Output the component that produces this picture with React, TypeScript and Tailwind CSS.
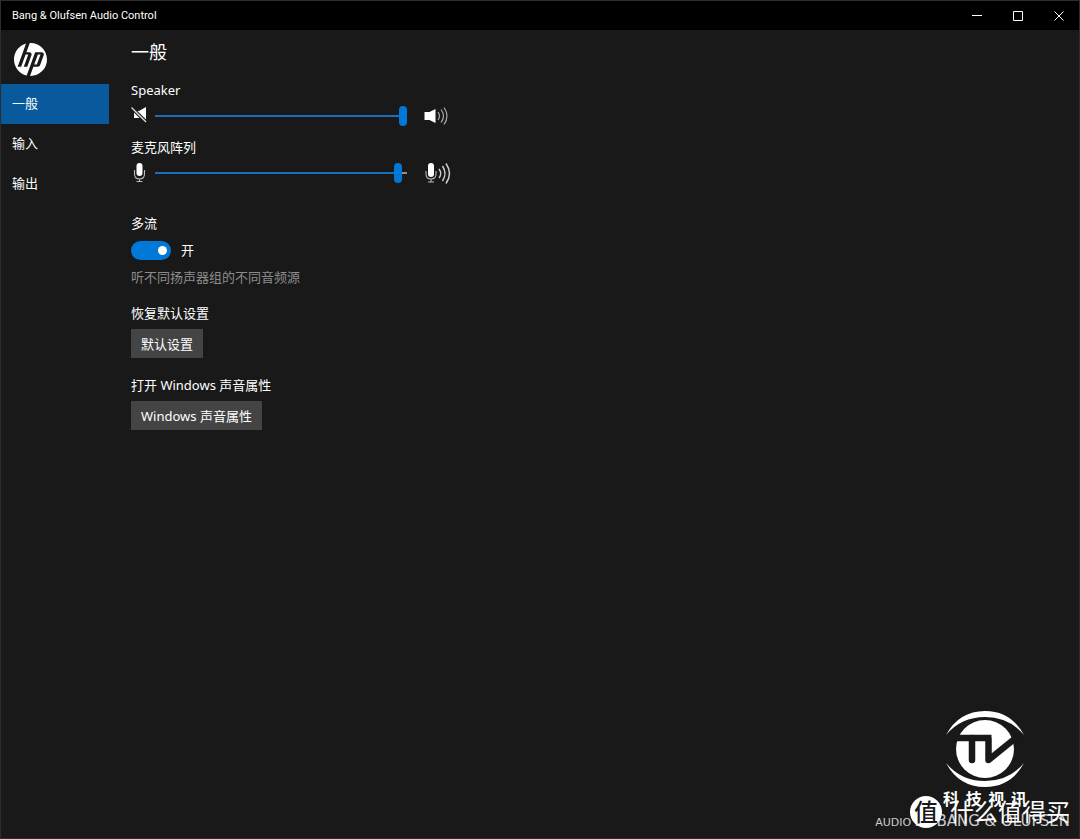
import React, { useState } from 'react'
import { SiHp } from 'react-icons/si'

const tabs = ['一般', '输入', '输出']

function SpeakerMuted() {
  return (
    <svg className="h-5 w-5" viewBox="0 0 20 20" fill="none">
      <path d="M3 5h5l7-4v15l-6-4H3z" fill="#fff" />
      <path d="M0 2.500l15 15" stroke="#191919" strokeWidth="1.500" />
      <path d="M1.500 1l14 14" stroke="#191919" strokeWidth="1.500" />
      <path d="M0.500 1.500l14.500 14.500" stroke="#ddd" strokeWidth="1.300" />
    </svg>
  )
}

function SpeakerLoud() {
  return (
    <svg className="h-6 w-7" viewBox="0 0 28 24" fill="none">
      <path d="M1.500 8h5l6-3v14l-6-3h-5z" fill="#fff" />
      <g stroke="#aaa" strokeWidth="1.2">
        <path d="M15 8q3 4 0 8" />
        <path d="M18 5.500q5 6.500 0 13" />
        <path d="M21 3.500q6 8.500 0 17" />
      </g>
    </svg>
  )
}

function Mic() {
  return (
    <svg className="h-5 w-5" viewBox="0 0 20 20" fill="none">
      <rect x="5.500" y="0" width="6" height="13" rx="3" fill="#fff" />
      <path d="M3.500 7v4q0 5 5 5t5-5V7M8.500 16v2.500M5.500 18.500h6" stroke="#bbb" strokeWidth="1.100" />
    </svg>
  )
}

function MicLoud() {
  return (
    <svg className="h-6 w-7" viewBox="0 0 28 24" fill="none">
      <rect x="5" y="2" width="6" height="14" rx="3" fill="#fff" />
      <path d="M3 10v3q0 5 5 5t5-5v-3M8 18v3M5 21h6" stroke="#bbb" strokeWidth="1.100" />
      <g stroke="#ccc" strokeWidth="1.500">
        <path d="M16 8q3.500 4.500 0 9" />
        <path d="M19.500 5q5 7.500 0 15" />
        <path d="M23 2.500q7 10 0 20" />
      </g>
    </svg>
  )
}

type VolumeProps = {
  id: string
  label: string
  start: number
  low: React.ReactNode
  high: React.ReactNode
}

function Volume({ id, label, start, low, high }: VolumeProps) {
  const [value, setValue] = useState(start)
  return (
    <div>
      <label htmlFor={id} className="block leading-5">{label}</label>
      <div className="mt-1 flex h-6 items-center">
        <div className="w-6 shrink-0">{low}</div>
        <input
          id={id}
          type="range"
          min="0"
          max="100"
          value={value}
          onChange={(e) => setValue(Number(e.target.value))}
          style={{ backgroundImage: `linear-gradient(to right, #1b6fb8 ${value}%, #a08c7c ${value}%)` }}
          className="h-5 w-full max-w-[252px] cursor-pointer appearance-none bg-[length:100%_2px] bg-center bg-no-repeat outline-none [&::-webkit-slider-thumb]:h-5 [&::-webkit-slider-thumb]:w-2 [&::-webkit-slider-thumb]:appearance-none [&::-webkit-slider-thumb]:rounded-full [&::-webkit-slider-thumb]:bg-[#0078d7]"
        />
        <div className="ml-4 shrink-0">{high}</div>
      </div>
    </div>
  )
}

function Watermark() {
  return (
    <div className="pointer-events-none absolute right-[9px] bottom-[10px] w-40">
      <div className="ml-[27px] flex w-24 flex-col items-center">
        <svg className="h-20 w-20" viewBox="0 0 80 80">
          <path d="M1 26Q14 2 40 2t39 24Q64 8 40 8T1 26z" fill="#fff" />
          <path d="M1 54q13 24 39 24t39-24Q64 72 40 72T1 54z" fill="#fff" />
          <circle cx="40" cy="40" r="29" fill="#fff" />
          <g fill="none" stroke="#191919" strokeWidth="6.500">
            <path d="M10 29h36.500M43.500 29v22L72 28" strokeLinejoin="round" />
            <path d="M27 29v22" strokeLinecap="round" />
          </g>
        </svg>
        <div className="flex w-[84px] justify-between text-base leading-5 font-bold">
          <span>科</span><span>技</span><span>视</span><span>讯</span>
        </div>
      </div>
      <div className="-mt-[13px] flex items-center gap-2">
        <span className="flex size-8 shrink-0 items-center justify-center rounded-full bg-white text-2xl leading-8 font-medium text-[#191919]">值</span>
        <span className="text-2xl leading-8 whitespace-nowrap">什么值得买</span>
      </div>
    </div>
  )
}

function App() {
  const [tab, setTab] = useState(0)
  const [multi, setMulti] = useState(true)

  return (
    <div className="relative flex min-h-screen flex-col border border-[#2d2d2d] bg-[#191919] font-['Noto_Sans','Noto_Sans_CJK_SC',sans-serif] text-[13px] text-white">
      <header className="flex h-[29px] items-center justify-between bg-black pl-[11px]">
        <h1 className="pt-[2px] font-['Roboto',sans-serif] text-[11px]">Bang &amp; Olufsen Audio Control</h1>
        <div className="flex h-full">
          <button aria-label="Minimize" className="flex w-[41px] items-center justify-center">
            <svg className="h-3 w-3" viewBox="0 0 12 12" stroke="#fff"><path d="M1 5.500h10" /></svg>
          </button>
          <button aria-label="Maximize" className="flex w-[41px] items-center justify-center">
            <svg className="h-3 w-3" viewBox="0 0 12 12" stroke="#fff" fill="none"><path d="M1.500 1.500h9v9h-9z" /></svg>
          </button>
          <button aria-label="Close" className="flex w-[41px] items-center justify-center">
            <svg className="h-3 w-3" viewBox="0 0 12 12" stroke="#fff"><path d="M1.500 1.500l9 9M10.500 1.500l-9 9" /></svg>
          </button>
        </div>
      </header>

      <div className="flex flex-1">
        <aside className="w-[108px] shrink-0">
          <SiHp className="mt-[13px] mb-2 ml-[13px] size-[33px]" />
          <nav>
            {tabs.map((name, i) => (
              <button
                key={name}
                onClick={() => setTab(i)}
                className={'block h-10 w-full pl-[11px] text-left ' + (tab === i ? 'bg-[#085a9d]' : 'hover:bg-[#2b2b2b]')}
              >
                {name}
              </button>
            ))}
          </nav>
        </aside>

        <main className="flex-1 pt-2 pl-[22px]">
          <h2 className="mb-[14px] text-lg leading-7">一般</h2>

          <div className="flex flex-col gap-[9px]">
            <Volume id="speaker" label="Speaker" start={100} low={<SpeakerMuted />} high={<SpeakerLoud />} />
            <Volume id="mic" label="麦克风阵列" start={98} low={<Mic />} high={<MicLoud />} />
          </div>

          <section className="mt-7 leading-5">
            <h3>多流</h3>
            <div className="mt-[7px] flex items-center gap-[10px]">
              <input
                id="multi"
                type="checkbox"
                role="switch"
                checked={multi}
                onChange={(e) => setMulti(e.target.checked)}
                className="flex h-[19px] w-10 cursor-pointer appearance-none items-center justify-start rounded-full bg-[#555] px-1 before:size-[9px] before:rounded-full before:bg-white checked:justify-end checked:bg-[#0078d7]"
              />
              <label htmlFor="multi">{multi ? '开' : '关'}</label>
            </div>
            <p className="mt-[7px] text-[#8c8c8c]">听不同扬声器组的不同音频源</p>
          </section>

          <section className="mt-4 leading-5">
            <h3>恢复默认设置</h3>
            <button className="mt-[6px] h-[29px] bg-[#444] px-[10px]">默认设置</button>
          </section>

          <section className="mt-[17px] leading-5">
            <h3>打开 Windows 声音属性</h3>
            <button className="mt-[6px] h-[29px] bg-[#444] px-[10px]">Windows 声音属性</button>
          </section>
        </main>
      </div>

      <footer className="flex items-baseline justify-end gap-2 pr-[9px] pb-[5px] font-['DejaVu_Sans',sans-serif] leading-5 text-[#ccc]">
        <span className="text-[11px]">AUDIO BY</span>
        <span className="text-[15px]">BANG &amp; OLUFSEN</span>
      </footer>
      <Watermark />
    </div>
  )
}

export default App
